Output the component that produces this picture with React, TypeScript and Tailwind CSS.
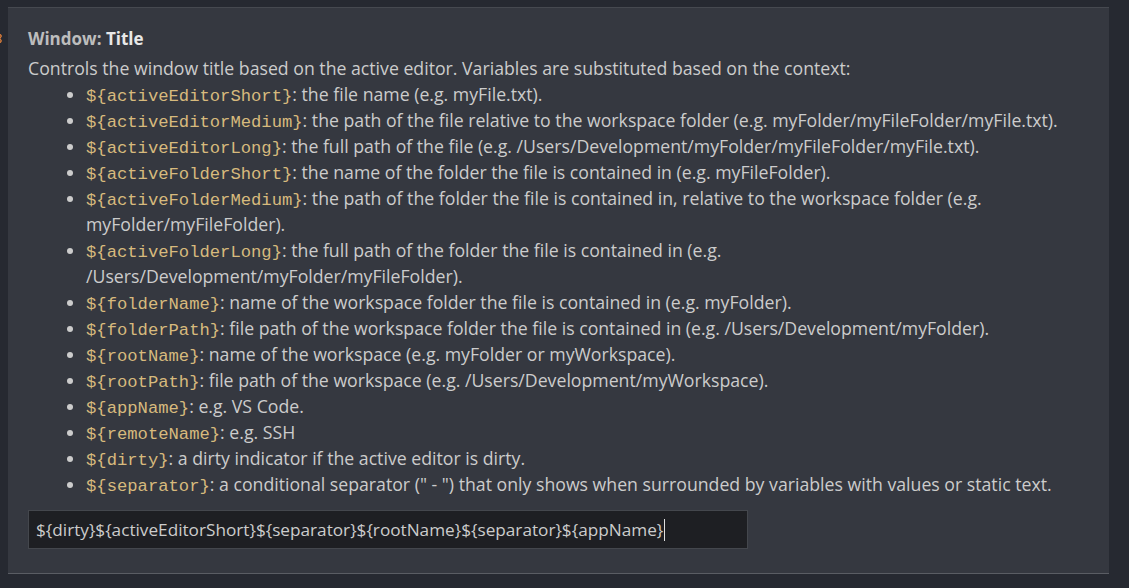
import React from 'react';
import { Settings } from 'lucide-react';

type Item = { code: string; text: string };

const items: Item[] = [
  { code: 'activeEditorShort', text: 'the file name (e.g. myFile.txt).' },
  { code: 'activeEditorMedium', text: 'the path of the file relative to the workspace folder (e.g. myFolder/myFileFolder/myFile.txt).' },
  { code: 'activeEditorLong', text: 'the full path of the file (e.g. /Users/Development/myFolder/myFileFolder/myFile.txt).' },
  { code: 'activeFolderShort', text: 'the name of the folder the file is contained in (e.g. myFileFolder).' },
  { code: 'activeFolderMedium', text: 'the path of the folder the file is contained in, relative to the workspace folder (e.g. myFolder/myFileFolder).' },
  { code: 'activeFolderLong', text: 'the full path of the folder the file is contained in (e.g. /Users/Development/myFolder/myFileFolder).' },
  { code: 'folderName', text: 'name of the workspace folder the file is contained in (e.g. myFolder).' },
  { code: 'folderPath', text: 'file path of the workspace folder the file is contained in (e.g. /Users/Development/myFolder).' },
  { code: 'rootName', text: 'name of the workspace (e.g. myFolder or myWorkspace).' },
  { code: 'rootPath', text: 'file path of the workspace (e.g. /Users/Development/myWorkspace).' },
  { code: 'appName', text: 'e.g. VS Code.' },
  { code: 'remoteName', text: 'e.g. SSH' },
  { code: 'dirty', text: 'a dirty indicator if the active editor is dirty.' },
  { code: 'separator', text: 'a conditional separator (" - ") that only shows when surrounded by variables with values or static text.' },
];

export default function App() {
  return (
    <div className="w-[1129px] h-[588px] bg-[#262931] pt-[7px] pl-[8px] pr-[20px] overflow-hidden font-['Open_Sans',Arial,sans-serif] text-[17.7px] leading-[26px] text-[#cccccc]">
      <div className="relative">
        <Settings size={15} className="absolute left-[-20px] top-[24px] text-[#e5813a]" strokeWidth={2} />
        <div className="bg-[#353840] border-t border-t-[#464950] border-b border-b-[#5a5d64] pl-[20px] pr-[12px] pt-[18px] pb-[24px]">
          <div className="font-bold text-[17px] mb-[3px]">
            <span className="text-[#bdbdbd]">Window: </span>
            <span className="text-[#e8e8e8]">Title</span>
          </div>
          <div>Controls the window title based on the active editor. Variables are substituted based on the context:</div>
          <ul className="list-disc pl-[58px] marker:text-[#cccccc]">
            {items.map(it => (
              <li key={it.code}>
                <span className="font-['Liberation_Mono',monospace] text-[17.2px] leading-none text-[#d7ba7d]">{'${' + it.code + '}'}</span>: {it.text}
              </li>
            ))}
          </ul>
          <div className="mt-[13px] w-[720px] h-[39px] bg-[#1e1f23] border border-[#44474d] flex items-center px-[7px] text-[17.2px] text-[#cccccc]">
            <span>{'${dirty}${activeEditorShort}${separator}${rootName}${separator}${appName}'}</span>
            <span className="inline-block w-px h-[22px] bg-[#e0e0e0] ml-px" />
          </div>
        </div>
      </div>
    </div>
  );
}
